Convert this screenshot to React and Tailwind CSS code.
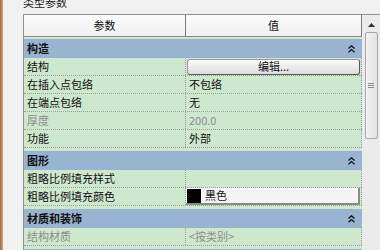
import React from "react";

const groups = [
  {
    title: "构造",
    gap: "h-[2px]",
    rows: [
      { label: "结构", value: { type: "button", text: "编辑..." } },
      { label: "在插入点包络", value: "不包络" },
      { label: "在端点包络", value: "无" },
      { label: "厚度", value: "200.0", disabled: true },
      { label: "功能", value: "外部" },
    ],
  },
  {
    title: "图形",
    gap: "h-[3px]",
    rows: [
      { label: "粗略比例填充样式", value: "" },
      { label: "粗略比例填充颜色", value: { type: "color", text: "黑色" } },
    ],
  },
  {
    title: "材质和装饰",
    gap: "h-[3px]",
    rows: [{ label: "结构材质", value: "<按类别>", disabled: true }],
  },
  { title: "", gap: "h-[3px]", rows: [] },
];

function Chevrons() {
  return (
    <svg width="7" height="8" viewBox="0 0 7 8" className="block">
      <path d="M0.5 3.5 L3.5 0.8 L6.5 3.5" fill="none" stroke="#111" strokeWidth="1.3" />
      <path d="M0.5 7.2 L3.5 4.5 L6.5 7.2" fill="none" stroke="#111" strokeWidth="1.3" />
    </svg>
  );
}

function Value({ row }) {
  const v = row.value;
  if (v && typeof v === "object" && v.type === "button") {
    return (
      <div className="flex-1 h-full flex items-center pl-[1px] pr-[1px]">
        <div className="w-full h-[16px] rounded-[3px] border border-[#9a9a9a] border-r-[#5a5a5a] border-b-[#5a5a5a] bg-gradient-to-b from-[#fafafa] to-[#dcdcdc] flex items-center justify-center text-[11px] leading-none text-[#111]">
          {v.text}
        </div>
      </div>
    );
  }
  if (v && typeof v === "object" && v.type === "color") {
    return (
      <div className="flex-1 h-full flex items-center pr-[1px]">
        <div className="w-full h-[17px] bg-[#f4f4f4] border-r-2 border-b-2 border-[#8a8a8a] flex items-center">
          <div className="w-[14px] h-[14px] bg-black ml-[1px]" />
          <span className="ml-[4px] text-[11px] leading-none text-[#111]">{v.text}</span>
        </div>
      </div>
    );
  }
  return (
    <div
      className={`flex-1 h-full flex items-center pl-[3px] text-[11px] leading-none ${
        row.disabled ? "text-[#8c8c8c]" : "text-[#111]"
      }`}
    >
      {v}
    </div>
  );
}

export default function App() {
  return (
    <div className="w-[380px] h-[250px] bg-[#f0f0f0] flex overflow-hidden font-['Noto_Sans_CJK_SC','Noto_Sans',sans-serif]">
      <div className="w-[3px] h-full shrink-0 bg-gradient-to-r from-[#a9643a] to-[#d9a47c]" />
      <div className="flex-1 flex flex-col pl-[20px] min-h-0">
        <div className="h-[14px] shrink-0 overflow-hidden">
          <div className="mt-[-4px] text-[11px] leading-[12px] text-[#222]">类型参数</div>
        </div>
        <div className="flex border-l border-t border-[#8e8f8f] w-[360px] flex-1 min-h-0 overflow-hidden">
          <div className="w-[338px] shrink-0 flex flex-col">
            {/* header */}
            <div className="flex shrink-0 h-[22px] border-b border-[#8a8a8a] bg-gradient-to-b from-[#fbfbfb] to-[#f0f0f0]">
              <div className="w-[162px] border-r border-[#7a7a7a] flex items-center justify-center text-[11px] leading-none text-[#111]">
                参数
              </div>
              <div className="flex-1 border-r border-[#7a7a7a] flex items-center justify-center text-[11px] leading-none text-[#111]">
                值
              </div>
            </div>
            <div className="flex-1 bg-[#cde8cd]">
              {groups.map((g, gi) => (
                <div key={gi}>
                  <div className={g.gap} />
                  <div className="h-[19px] bg-[#99b4d1] flex items-center justify-between pl-[3px] pr-[7px] text-[11px] leading-none font-bold text-[#111]">
                    <span>{g.title}</span>
                    <Chevrons />
                  </div>
                  {g.rows.map((r, ri) => (
                    <div
                      key={ri}
                      className="flex h-[18px] border-b border-dotted border-[#9c9c9c]"
                    >
                      <div
                        className={`w-[162px] h-full border-r border-dotted border-[#9c9c9c] flex items-center pl-[3px] text-[11px] leading-none ${
                          r.disabled ? "text-[#8c8c8c]" : "text-[#111]"
                        }`}
                      >
                        {r.label}
                      </div>
                      <div className="flex-1 h-full flex border-r border-dotted border-[#9c9c9c]">
                        <Value row={r} />
                      </div>
                    </div>
                  ))}
                </div>
              ))}
            </div>
          </div>
          {/* scrollbar */}
          <div className="w-[18px] shrink-0 bg-[#ebebeb] flex flex-col items-center">
            <div className="h-[17px] w-full flex items-center justify-center">
              <svg width="7" height="4" viewBox="0 0 7 4" className="block mt-[2px]">
                <path d="M0 4 L3.5 0 L7 4 Z" fill="#333" />
              </svg>
            </div>
            <div className="w-[13px] h-[107px] rounded-[2px] border border-[#a8a8a8] bg-gradient-to-r from-[#f2f2f2] to-[#e2e2e2] flex items-center justify-center">
              <div className="flex flex-col gap-[1px]">
                <div className="w-[6px] h-[1px] bg-[#8a8a8a]" />
                <div className="w-[6px] h-[1px] bg-[#8a8a8a]" />
                <div className="w-[6px] h-[1px] bg-[#8a8a8a]" />
              </div>
            </div>
          </div>
        </div>
      </div>
    </div>
  );
}
